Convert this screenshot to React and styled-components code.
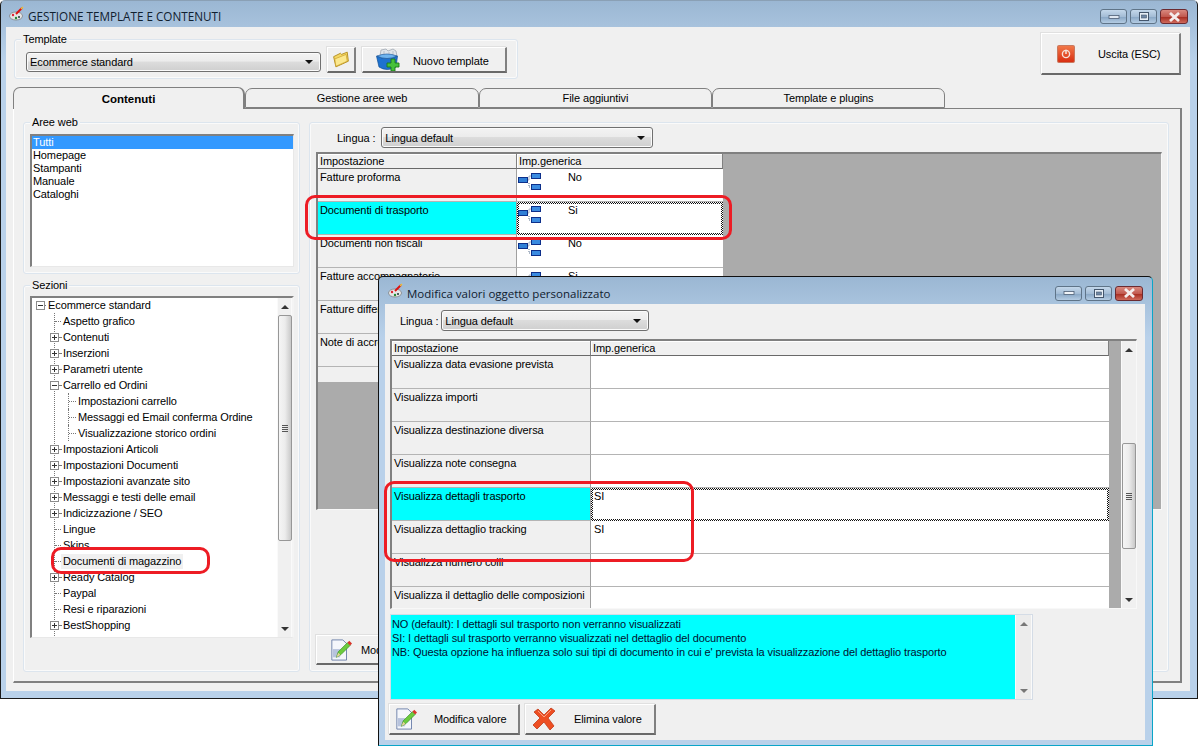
import styled, { createGlobalStyle } from "styled-components";

const GlobalStyle = createGlobalStyle`
  html, body { margin: 0; padding: 0; background: #fff; }
  body { font-family: "Liberation Sans", Arial, sans-serif; font-size: 11px; letter-spacing: -0.1px; color: #000; }
  * { box-sizing: border-box; }
`

const Page = styled.div`
  position: relative;
  width: 1199px;
  height: 746px;
  overflow: hidden;
  background: #fff;
`
const MainWindow = styled.div`
  width: 1198px;
  height: 699px;
  display: flex;
  flex-direction: column;
  padding: 0 7px 7px 5px;
  background: linear-gradient(to bottom, #9bb7d3, #b9d1ea 60px);
  border: 1px solid #1a1a1a;
  border-top-color: #8aa0b5;
  border-radius: 5px 5px 0 0;
`
const DialogWindow = styled.div`
  position: absolute;
  left: 378px;
  top: 276px;
  width: 775px;
  height: 470px;
  display: flex;
  flex-direction: column;
  padding: 0 7px 5px 6px;
  background: linear-gradient(to bottom, #9bb7d3, #b9d1ea 60px);
  border: 1px solid #111;
  border-right-color: #0aa5c8;
  border-bottom-color: #0aa5c8;
  border-radius: 5px 5px 0 0;
`
const TitleBar = styled.div`
  height: ${(p) => p.h}px;
  flex: none;
  display: flex;
  align-items: center;
  padding-left: ${(p) => p.pad}px;
  gap: 3px;
`
const TitleText = styled.div`
  font-family: "Open Sans", sans-serif;
  font-size: ${(p) => p.size}px;
  letter-spacing: 0;
  color: #10202f;
  flex: 1;
  padding-top: ${(p) => p.top}px;
`
const Controls = styled.div`
  display: flex;
  gap: 3px;
  margin-right: 2px;
  margin-top: 5px;
`
const ControlBtn = styled.div`
  width: ${(p) => (p.close ? 28 : 27)}px;
  height: 15px;
  border: 1px solid ${(p) => (p.close ? "#6b2a30" : "#5f7488")};
  border-radius: 3px;
  display: flex;
  align-items: center;
  justify-content: center;
  background: ${(p) =>
    p.close
      ? "linear-gradient(to bottom, #d9897f, #c25a50 50%, #a82e22 55%, #cf6a5c)"
      : "linear-gradient(to bottom, #c4d8eb, #a4bdd6 50%, #8aa8c6 55%, #b4cce3)"};
`
const Client = styled.div`
  flex: 1;
  min-height: 0;
  background: #f0f0f0;
  display: flex;
  flex-direction: column;
`
const TopRow = styled.div`
  height: 60px;
  flex: none;
  display: flex;
  justify-content: space-between;
  align-items: flex-start;
  padding: 6px 9px 0 8px;
`
const GroupBox = styled.div`
  position: relative;
  width: ${(p) => p.w}px;
  height: ${(p) => p.h}px;
  flex: none;
  border: 1px solid #dce5ee;
  border-radius: 3px;
  box-shadow: inset 0 0 0 1px #fafafa;
  margin-top: ${(p) => p.mt || 0}px;
  padding: ${(p) => p.pad};
`
const GroupLegend = styled.div`
  position: absolute;
  top: -7px;
  left: 6px;
  background: #f0f0f0;
  padding: 0 2px;
  line-height: 13px;
`
const TemplateRow = styled.div`
  display: flex;
  align-items: flex-start;
  gap: 6px;
`
const Combo = styled.div`
  width: ${(p) => p.w}px;
  height: ${(p) => p.h || 21}px;
  flex: none;
  display: flex;
  align-items: center;
  justify-content: space-between;
  padding: 0 7px 0 3px;
  border: 1px solid #707070;
  border-radius: 3px;
  background: linear-gradient(to bottom, #f3f3f3, #ececec 45%, #dcdcdc 50%, #cfcfcf);
  box-shadow: inset 0 0 0 1px #fbfbfb;
`
const ComboArrow = styled.span`
  width: 0;
  height: 0;
  border-left: 4px solid transparent;
  border-right: 4px solid transparent;
  border-top: 4px solid #111;
`
const Btn = styled.div`
  width: ${(p) => p.w}px;
  height: ${(p) => p.h}px;
  flex: none;
  display: flex;
  align-items: center;
  background: #f0f0f0;
  border-top: 1px solid #fff;
  border-left: 1px solid #fff;
  border-right: 2px solid #808080;
  border-bottom: 2px solid #696969;
  box-shadow: -1px -1px 0 #e0e0e0;
  padding-left: ${(p) => p.pad || 0}px;
  margin: ${(p) => p.margin || 0};
  overflow: hidden;
  justify-content: ${(p) => (p.center ? "center" : "flex-start")};
`
const BtnLabel = styled.span`
  margin-left: ${(p) => p.gap}px;
  margin-top: ${(p) => p.mt || 0}px;
  white-space: nowrap;
`
const TabStrip = styled.div`
  height: 21px;
  flex: none;
  display: flex;
  align-items: flex-end;
  padding-left: 7px;
`
const Tab = styled.div`
  width: ${(p) => p.w}px;
  height: ${(p) => (p.active ? 22 : 20)}px;
  flex: none;
  text-align: center;
  font-weight: ${(p) => (p.active ? "bold" : "normal")};
  font-size: ${(p) => (p.active ? "11.5px" : "11px")};
  letter-spacing: ${(p) => (p.active ? "0" : "-0.1px")};
  line-height: ${(p) => (p.active ? 22 : 18)}px;
  background: #f0f0f0;
  border: 1px solid #808080;
  border-bottom: ${(p) => (p.active ? "0" : "1px solid #808080")};
  border-right-width: ${(p) => (p.active ? 2 : 1)}px;
  border-radius: 7px 7px 0 0;
  position: relative;
  z-index: ${(p) => (p.active ? 1 : 0)};
  margin-bottom: ${(p) => (p.active ? -1 : 0)}px;
`
const TabPage = styled.div`
  height: 575px;
  width: 1169px;
  flex: none;
  margin-left: 7px;
  display: flex;
  gap: 9px;
  padding: 13px 0 0 9px;
  border-left: 1px solid #fff;
  border-top: 1px solid #808080;
  border-right: 2px solid #808080;
  border-bottom: 2px solid #808080;
`
const LeftCol = styled.div`
  width: 277px;
  flex: none;
  display: flex;
  flex-direction: column;
  gap: 11px;
`
const ListBox = styled.div`
  width: 264px;
  height: 133px;
  background: #fff;
  border-top: 2px solid #808080;
  border-left: 2px solid #808080;
  border-right: 1px solid #e8e8e8;
  border-bottom: 1px solid #e8e8e8;
`
const ListItem = styled.div`
  height: 13px;
  line-height: 13px;
  padding-left: 1px;
  background: ${(p) => (p.selected ? "#3399ff" : "transparent")};
  color: ${(p) => (p.selected ? "#fff" : "#000")};
`
const TreeBox = styled.div`
  width: 264px;
  height: 342px;
  display: flex;
  background: #fff;
  border-top: 2px solid #808080;
  border-left: 2px solid #808080;
  border-right: 2px solid #f4f4f4;
  border-bottom: 1px solid #e8e8e8;
`
const TreeList = styled.div`
  flex: 1;
  height: 100%;
  overflow: hidden;
  & > :first-child { margin-top: -1px; }
`
const TreeRow = styled.div`
  height: 16px;
  display: flex;
  align-items: center;
  padding-left: ${(p) => p.indent}px;
  white-space: nowrap;
  background: ${(p) =>
    p.guide ? "linear-gradient(#777 50%, transparent 50%) 22px 0 / 1px 2px repeat-y" : "none"};
`
const Expander = styled.span`
  width: 9px;
  height: 9px;
  flex: none;
  border: 1px solid #8c8c8c;
  background:
    linear-gradient(#333, #333) center / 5px 1px no-repeat,
    ${(p) => (p.open ? "none" : "linear-gradient(#333, #333) center / 1px 5px no-repeat")};
  background-color: #fff;
`
const TreeDots = styled.span`
  width: ${(p) => p.w}px;
  flex: none;
  border-top: 1px dotted #777;
`
const TreeLabel = styled.span`
  padding: 0 2px;
  line-height: 15px;
  background: ${(p) => (p.selected ? "#f0f0f0" : "transparent")};
`
const Guide = styled.span`
  width: 1px;
  height: 16px;
  flex: none;
  margin-left: ${(p) => p.offset}px;
  border-left: 1px dotted #777;
`
const ScrollBar = styled.div`
  width: ${(p) => p.w}px;
  height: 100%;
  flex: none;
  display: flex;
  flex-direction: column;
  align-items: center;
  background: ${(p) => (p.soft ? "#ececec" : "#f0f0f0")};
  border-left: 1px solid #fafafa;
  border-right: 1px solid #fafafa;
`
const ScrollArrow = styled.div`
  height: ${(p) => p.h || 17}px;
  flex: none;
  display: flex;
  align-items: center;
  justify-content: center;
  &::after {
    content: "";
    width: 0;
    height: 0;
    border-left: 4px solid transparent;
    border-right: 4px solid transparent;
    ${(p) => (p.down ? "border-top" : "border-bottom")}: 4px solid ${(p) => p.tone || "#333"};
  }
`
const ScrollGap = styled.div`
  height: ${(p) => p.h || 0}px;
  flex: ${(p) => (p.grow ? 1 : "none")};
`
const ScrollThumb = styled.div`
  width: 14px;
  height: ${(p) => p.h}px;
  flex: none;
  display: flex;
  flex-direction: column;
  align-items: center;
  justify-content: center;
  gap: 1px;
  border: 1px solid #979797;
  border-radius: 2px;
  background: linear-gradient(to right, #f5f5f5, #ececec 50%, #c9c9c9);
`
const GripLine = styled.span`
  width: 6px;
  height: 1px;
  background: #555;
`
const RightGroup = styled(GroupBox)`
  display: flex;
  flex-direction: column;
`
const LinguaRow = styled.div`
  height: 21px;
  flex: none;
  display: flex;
  align-items: center;
  gap: ${(p) => p.gap}px;
  padding-left: ${(p) => p.pad}px;
  margin-top: ${(p) => p.mt || 0}px;
`
const GridFrame = styled.div`
  width: ${(p) => p.w}px;
  height: ${(p) => p.h}px;
  flex: none;
  margin-top: ${(p) => p.mt}px;
  margin-left: ${(p) => p.ml}px;
  display: flex;
  background: #ababab;
  border-top: 2px solid #808080;
  border-left: 2px solid #808080;
  border-right: 1px solid #f8f8f8;
  border-bottom: 1px solid #f8f8f8;
  overflow: hidden;
`
const GridBody = styled.div`
  width: ${(p) => p.w}px;
  flex: none;
`
const Row = styled.div`
  display: grid;
  grid-template-columns: 199px 1fr;
  height: ${(p) => p.h || 33}px;
  overflow: hidden;
`
const HeadCell = styled.div`
  background: #f0f0f0;
  line-height: 14px;
  padding-left: 2px;
  border-bottom: 1px solid #696969;
  border-right: 1px solid #808080;
  box-shadow: inset 1px 1px 0 #fff;
`
const NameCell = styled.div`
  background: ${(p) => (p.active ? "#00ffff" : "#f0f0f0")};
  padding: 1px 0 0 2px;
  line-height: 14px;
  border-bottom: 1px solid #b4b4b4;
  border-right: 1px solid #a0a0a0;
`
const ValueCell = styled.div`
  background: #fff;
  display: flex;
  align-items: flex-start;
  padding: 1px 0 0 ${(p) => (p.icon ? 0 : 3)}px;
  line-height: 14px;
  border-bottom: 1px solid #b4b4b4;
`
const FocusCell = styled.div`
  border: 2px solid transparent;
  background:
    linear-gradient(#fff, #fff) padding-box,
    repeating-conic-gradient(#111 0 25%, #fff 0 50%) 0 0 / 2px 2px border-box;
`
const FocusInner = styled.div`
  margin: -2px 0 0 -2px;
  display: flex;
  align-items: flex-start;
  padding: 1px 0 0 ${(p) => (p.icon ? 0 : 3)}px;
  line-height: 14px;
`
const ValueText = styled.span`
  margin-left: ${(p) => p.gap || 0}px;
`
const IconSvg = styled.svg`
  flex: none;
  margin-top: ${(p) => p.mt || 0}px;
`
const BlankRow = styled.div`
  height: 15px;
  background: #f0f0f0;
`
const GapStrip = styled.div`
  width: ${(p) => p.w}px;
  flex: none;
  background: #ababab;
`
const GridScrollTrack = styled.div`
  flex: 1;
  display: flex;
  justify-content: center;
  background: #f2f2f2;
`
const DescBox = styled.div`
  width: 643px;
  height: 86px;
  margin: 5px 0 0 5px;
  flex: none;
  display: flex;
  background: #00ffff;
  border: 1px solid #d4dce6;
`
const DescText = styled.div`
  flex: 1;
  padding: 2px 0 0 1px;
  color: #001030;
  line-height: 14px;
`
const DescLine = styled.div`
  white-space: nowrap;
`
const BtnRow = styled.div`
  display: flex;
  gap: 5px;
  margin: 4px 0 0 4px;
`
const Annotation = styled.div`
  position: absolute;
  left: ${(p) => p.x}px;
  top: ${(p) => p.y}px;
  width: ${(p) => p.w}px;
  height: ${(p) => p.h}px;
  border: 3px solid #ed1c24;
  border-radius: ${(p) => p.r}px;
`

function AppIcon() {
  return (
    <IconSvg width="16" height="16" viewBox="0 0 16 16">
      <ellipse cx="7" cy="10" rx="6.5" ry="4" fill="#e6e6e6" stroke="#777" strokeWidth="0.7" />
      <circle cx="4" cy="9" r="1.2" fill="#d23" />
      <circle cx="7" cy="12" r="1.2" fill="#283" />
      <circle cx="10" cy="11" r="1" fill="#233" />
      <path d="M7 8 L13 2" stroke="#d11" strokeWidth="2" />
      <path d="M12 3 L14 1" stroke="#e9c33c" strokeWidth="1.5" />
    </IconSvg>
  )
}

function MinIcon({ light }) {
  return <svg width="12" height="6" viewBox="0 0 12 6"><rect x="1" y="1.5" width="10" height="3" fill={light ? "#f0f4f8" : "#dfe8f2"} stroke="#4c5e74" strokeWidth="0.8" /></svg>
}

function MaxIcon() {
  return <svg width="10" height="9" viewBox="0 0 10 9"><rect x="0.5" y="0.5" width="9" height="8" fill="#e6eef6" stroke="#44566c" /><rect x="2.5" y="3" width="5" height="3" fill="#6f88a5" stroke="#44566c" strokeWidth="0.6" /></svg>
}

function CloseIcon() {
  return <svg width="13" height="10" viewBox="0 0 13 10"><path d="M2 1 L11 9 M11 1 L2 9" stroke="#f4ecec" strokeWidth="2.8" /></svg>
}

function FolderIcon() {
  return (
    <svg width="18" height="17" viewBox="0 0 15 15">
      <path d="M1 5 L7 2 L8 3 L13 1 L14 9 L3 14 Z" fill="#f5d863" stroke="#b08a1c" strokeWidth="0.8" />
      <path d="M2 7 L12 3 L13 9 L3 13.5 Z" fill="#fbe88e" stroke="#c89e28" strokeWidth="0.6" />
    </svg>
  )
}

function NewTemplateIcon() {
  return (
    <svg width="24" height="24" viewBox="0 0 24 24">
      <path d="M4 8 L5 2 L10 1 L12 3 L17 1 L20 3 L21 8 Z" fill="#dfe4ea" stroke="#98a0aa" strokeWidth="0.7" />
      <path d="M8 3 V7 M13 4 V7 M17 3 V7" stroke="#aab2bc" strokeWidth="0.7" />
      <path d="M0.5 8 Q11 13 21.5 8 L20 19 Q11 24 3 19 Z" fill="#1e72cf" stroke="#0f4d95" strokeWidth="0.7" />
      <path d="M1 8 Q11 4 21 8 Q11 13 1 8 Z" fill="#6fb4ee" stroke="#0f4d95" strokeWidth="0.6" />
      <path d="M15 11h4v4h4v4h-4v4h-4v-4h-4v-4h4z" fill="#45c23a" stroke="#1c7a18" strokeWidth="0.9" />
    </svg>
  )
}

function PowerIcon() {
  return (
    <svg width="18" height="18" viewBox="0 0 17 17">
      <defs>
        <linearGradient id="pw" x1="0" y1="0" x2="0" y2="1">
          <stop offset="0" stopColor="#f27a4a" />
          <stop offset="1" stopColor="#d82c10" />
        </linearGradient>
      </defs>
      <rect x="0.5" y="0.5" width="16" height="16" rx="1.5" fill="url(#pw)" stroke="#c9795f" />
      <circle cx="8.5" cy="8.5" r="3.4" fill="none" stroke="#f6e4dc" strokeWidth="1.3" />
      <path d="M8.5 4.5 V8.5" stroke="#f6e4dc" strokeWidth="1.4" />
    </svg>
  )
}

function HierarchyIcon() {
  return (
    <IconSvg width="24" height="18" viewBox="0 0 24 18" mt={3}>
      <path d="M10.5 7 H12 V3 H14 M12 10 V14 H14" stroke="#5d7290" strokeWidth="1" strokeDasharray="1 1" fill="none" />
      <rect x="1.5" y="4.5" width="9" height="5" fill="#2f7fd6" stroke="#0d2f8a" />
      <rect x="14.5" y="0.5" width="9" height="5" fill="#3a8be0" stroke="#0d2f8a" />
      <rect x="14.5" y="11.5" width="9" height="5" fill="#3a8be0" stroke="#0d2f8a" />
    </IconSvg>
  )
}

function EditIcon({ size }) {
  return (
    <IconSvg width={size} height={size} viewBox="0 0 24 24">
      <path d="M2 1 H14 L18 5 V23 H2 Z" fill="#f4f6fb" stroke="#6a7ea8" />
      <rect x="3" y="11" width="8" height="9" fill="#b7c3dd" />
      <path d="M7 20 L9 14 L19 4 L22 7 L12 17 Z" fill="#6ccb3e" stroke="#2e8a1c" strokeWidth="0.7" />
      <path d="M19 4 L21 2 L24 5 L22 7 Z" fill="#d8352a" />
      <path d="M7 20 L9 15 L11.5 17.5 Z" fill="#e8d39a" />
    </IconSvg>
  )
}

function DeleteIcon() {
  return (
    <IconSvg width="24" height="24" viewBox="0 0 24 24">
      <path d="M2 5 L6 2 L12 8 L19 1 L23 4 L16 11 L22 19 L18 23 L12 15 L5 22 L1 18 L8 11 Z" fill="#ee4e22" stroke="#c13a18" strokeWidth="0.8" />
      <path d="M6 4 L12 10 L19 3" fill="none" stroke="#f9a184" strokeWidth="1" />
    </IconSvg>
  )
}

const areeWeb = ["Tutti", "Homepage", "Stampanti", "Manuale", "Cataloghi"]

const treeItems = [
  { label: "Ecommerce standard", level: 0, kind: "open" },
  { label: "Aspetto grafico", level: 1, kind: "leaf" },
  { label: "Contenuti", level: 1, kind: "closed" },
  { label: "Inserzioni", level: 1, kind: "closed" },
  { label: "Parametri utente", level: 1, kind: "closed" },
  { label: "Carrello ed Ordini", level: 1, kind: "open" },
  { label: "Impostazioni carrello", level: 2, kind: "leaf" },
  { label: "Messaggi ed Email conferma Ordine", level: 2, kind: "leaf" },
  { label: "Visualizzazione storico ordini", level: 2, kind: "leaf" },
  { label: "Impostazioni Articoli", level: 1, kind: "closed" },
  { label: "Impostazioni Documenti", level: 1, kind: "closed" },
  { label: "Impostazioni avanzate sito", level: 1, kind: "closed" },
  { label: "Messaggi e testi delle email", level: 1, kind: "closed" },
  { label: "Indicizzazione / SEO", level: 1, kind: "closed" },
  { label: "Lingue", level: 1, kind: "leaf" },
  { label: "Skins", level: 1, kind: "leaf" },
  { label: "Documenti di magazzino", level: 1, kind: "leaf", selected: true },
  { label: "Ready Catalog", level: 1, kind: "closed" },
  { label: "Paypal", level: 1, kind: "leaf" },
  { label: "Resi e riparazioni", level: 1, kind: "leaf" },
  { label: "BestShopping", level: 1, kind: "closed" },
  { label: "Bando documenti ELENA", level: 1, kind: "closed" },
]

const mainRows = [
  { name: "Fatture proforma", value: "No" },
  { name: "Documenti di trasporto", value: "Si", active: true },
  { name: "Documenti non fiscali", value: "No" },
  { name: "Fatture accompagnatorie", value: "Si" },
  { name: "Fatture differite", value: "Si" },
  { name: "Note di accredito", value: "No" },
]

const dialogRows = [
  { name: "Visualizza data evasione prevista", value: "" },
  { name: "Visualizza importi", value: "" },
  { name: "Visualizza destinazione diversa", value: "" },
  { name: "Visualizza note consegna", value: "" },
  { name: "Visualizza dettagli trasporto", value: "SI", active: true },
  { name: "Visualizza dettaglio tracking", value: "SI" },
  { name: "Visualizza numero colli", value: "" },
  { name: "Visualizza il dettaglio delle composizioni", value: "" },
]

function Scroll({ w, thumbTop, thumbHeight }) {
  return (
    <ScrollBar w={w}>
      <ScrollArrow />
      <ScrollGap h={thumbTop} />
      <ScrollThumb h={thumbHeight}>
        <GripLine /><GripLine /><GripLine /><GripLine />
      </ScrollThumb>
      <ScrollGap grow />
      <ScrollArrow down />
    </ScrollBar>
  )
}

function TreeItem({ item }) {
  if (item.level === 0) {
    return (
      <TreeRow indent={4}>
        <Expander open />
        <TreeDots w={1} />
        <TreeLabel>{item.label}</TreeLabel>
      </TreeRow>
    )
  }
  if (item.level === 2) {
    return (
      <TreeRow indent={23} guide>
        <Guide offset={13} />
        <TreeDots w={7} />
        <TreeLabel>{item.label}</TreeLabel>
      </TreeRow>
    )
  }
  if (item.kind === "leaf") {
    return (
      <TreeRow indent={23} guide>
        <TreeDots w={6} />
        <TreeLabel selected={item.selected}>{item.label}</TreeLabel>
      </TreeRow>
    )
  }
  return (
    <TreeRow indent={18} guide>
      <Expander open={item.kind === "open"} />
      <TreeDots w={2} />
      <TreeLabel>{item.label}</TreeLabel>
    </TreeRow>
  )
}

function GridRow({ row, icon }) {
  const content = (
    <>
      {icon && <HierarchyIcon />}
      <ValueText gap={icon ? 27 : 0}>{row.value}</ValueText>
    </>
  )
  return (
    <Row>
      <NameCell active={row.active}>{row.name}</NameCell>
      {row.active ? (
        <FocusCell><FocusInner icon={icon}>{content}</FocusInner></FocusCell>
      ) : (
        <ValueCell icon={icon}>{content}</ValueCell>
      )}
    </Row>
  )
}

export default function App() {
  return (
    <Page>
      <GlobalStyle />
      <MainWindow>
        <TitleBar h={26} pad={3}>
          <AppIcon />
          <TitleText size={11.7} top={4}>GESTIONE TEMPLATE E CONTENUTI</TitleText>
          <Controls>
            <ControlBtn><MinIcon /></ControlBtn>
            <ControlBtn><MaxIcon /></ControlBtn>
            <ControlBtn close><CloseIcon /></ControlBtn>
          </Controls>
        </TitleBar>
        <Client>
          <TopRow>
            <GroupBox w={504} h={40} mt={6} pad="12px 0 0 11px">
              <GroupLegend>Template</GroupLegend>
              <TemplateRow>
                <Combo w={295} h={20}>Ecommerce standard<ComboArrow /></Combo>
                <Btn w={29} h={26} center margin="-5px 0 0 0"><FolderIcon /></Btn>
                <Btn w={145} h={26} pad={13} margin="-5px 0 0 0">
                  <NewTemplateIcon />
                  <BtnLabel gap={13} mt={3}>Nuovo template</BtnLabel>
                </Btn>
              </TemplateRow>
            </GroupBox>
            <Btn w={140} h={42} pad={15}>
              <PowerIcon />
              <BtnLabel gap={23}>Uscita (ESC)</BtnLabel>
            </Btn>
          </TopRow>
          <TabStrip>
            <Tab active w={232}>Contenuti</Tab>
            <Tab w={234}>Gestione aree web</Tab>
            <Tab w={233}>File aggiuntivi</Tab>
            <Tab w={233}>Template e plugins</Tab>
          </TabStrip>
          <TabPage>
            <LeftCol>
              <GroupBox w={277} h={152} pad="11px 0 0 6px">
                <GroupLegend>Aree web</GroupLegend>
                <ListBox>
                  {areeWeb.map((name, i) => (
                    <ListItem key={name} selected={i === 0}>{name}</ListItem>
                  ))}
                </ListBox>
              </GroupBox>
              <GroupBox w={277} h={387} pad="10px 0 0 6px">
                <GroupLegend>Sezioni</GroupLegend>
                <TreeBox>
                  <TreeList>
                    {treeItems.map((item) => <TreeItem key={item.label} item={item} />)}
                  </TreeList>
                  <Scroll w={15} thumbTop={0} thumbHeight={226} />
                </TreeBox>
              </GroupBox>
            </LeftCol>
            <RightGroup w={860} h={550} pad="4px 0 0 0">
              <LinguaRow pad={27} gap={6}>
                Lingua :
                <Combo w={272}>Lingua default<ComboArrow /></Combo>
              </LinguaRow>
              <GridFrame w={846} h={358} mt={4} ml={6}>
                <GridBody w={405}>
                  <Row h={15}>
                    <HeadCell>Impostazione</HeadCell>
                    <HeadCell>Imp.generica</HeadCell>
                  </Row>
                  {mainRows.map((row) => <GridRow key={row.name} row={row} icon />)}
                  <BlankRow />
                </GridBody>
              </GridFrame>
              <Btn w={140} h={30} pad={13} margin="125px 0 0 6px">
                <EditIcon size={22} />
                <BtnLabel gap={9}>Modifica</BtnLabel>
              </Btn>
            </RightGroup>
          </TabPage>
        </Client>
      </MainWindow>

      <DialogWindow>
        <TitleBar h={27} pad={3}>
          <AppIcon />
          <TitleText size={11.5} top={6}>Modifica valori oggetto personalizzato</TitleText>
          <Controls>
            <ControlBtn><MinIcon light /></ControlBtn>
            <ControlBtn><MaxIcon /></ControlBtn>
            <ControlBtn close><CloseIcon /></ControlBtn>
          </Controls>
        </TitleBar>
        <Client>
          <LinguaRow pad={15} gap={3} mt={6}>
            Lingua :
            <Combo w={208}>Lingua default<ComboArrow /></Combo>
          </LinguaRow>
          <GridFrame w={747} h={270} mt={8} ml={5}>
            <GridBody w={717}>
              <Row h={15}>
                <HeadCell>Impostazione</HeadCell>
                <HeadCell>Imp.generica</HeadCell>
              </Row>
              {dialogRows.map((row) => <GridRow key={row.name} row={row} />)}
            </GridBody>
            <GapStrip w={12} />
            <GridScrollTrack>
              <Scroll w={16} thumbTop={85} thumbHeight={106} />
            </GridScrollTrack>
          </GridFrame>
          <DescBox>
            <DescText>
              <DescLine>NO (default): I dettagli sul trasporto non verranno visualizzati</DescLine>
              <DescLine>SI: I dettagli sul trasporto verranno visualizzati nel dettaglio del documento</DescLine>
              <DescLine>NB: Questa opzione ha influenza solo sui tipi di documento in cui e' prevista la visualizzazione del dettaglio trasporto</DescLine>
            </DescText>
            <ScrollBar w={17} soft>
              <ScrollArrow tone="#777" />
              <ScrollGap grow />
              <ScrollArrow down tone="#777" />
            </ScrollBar>
          </DescBox>
          <BtnRow>
            <Btn w={131} h={31} pad={5}>
              <EditIcon size={22} />
              <BtnLabel gap={17}>Modifica valore</BtnLabel>
            </Btn>
            <Btn w={131} h={31} pad={6}>
              <DeleteIcon />
              <BtnLabel gap={18}>Elimina valore</BtnLabel>
            </Btn>
          </BtnRow>
        </Client>
      </DialogWindow>

      <Annotation x={305} y={195} w={427} h={45} r={10} />
      <Annotation x={51} y={547} w={159} h={27} r={10} />
      <Annotation x={384} y={481} w={310} h={81} r={10} />
    </Page>
  )
}
